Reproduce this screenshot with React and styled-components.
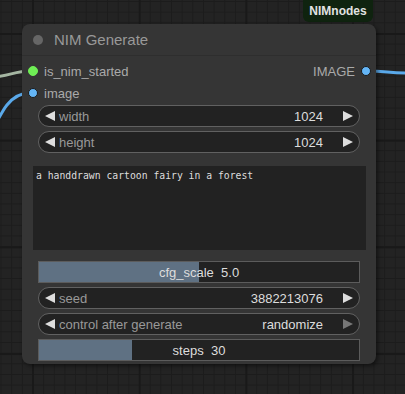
import React from 'react';
import styled, { createGlobalStyle } from 'styled-components';

const GlobalStyle = createGlobalStyle`
  html, body {
    margin: 0;
    padding: 0;
    background: #222222;
  }
  body {
    font-family: "Liberation Sans", Arial, sans-serif;
  }
`;

// canvas with the litegraph grid
const Canvas = styled.div`
  position: relative;
  width: 405px;
  height: 394px;
  overflow: hidden;
  background-color: #232323;
  background-image:
    linear-gradient(to right, #191919 2px, transparent 2px),
    linear-gradient(to bottom, #191919 2px, transparent 2px),
    linear-gradient(to right, #1c1c1c 1px, transparent 1px),
    linear-gradient(to bottom, #1c1c1c 1px, transparent 1px);
  background-size: 106.7px 106.7px, 106.7px 106.7px, 10.67px 10.67px, 10.67px 10.67px;
  background-position: 32px 33px, 32px 33px, 0.5px 1px, 0.5px 1px;
`;

const Wires = styled.svg`
  position: absolute;
  left: 0;
  top: 0;
  width: 405px;
  height: 394px;
`;

const Badge = styled.div`
  position: absolute;
  left: 303px;
  top: -6px;
  width: 70px;
  height: 28px;
  box-sizing: border-box;
  padding-top: 6px;
  border-radius: 6px;
  background: #0f230f;
  color: #e2e2e2;
  font-size: 12px;
  font-weight: bold;
  display: flex;
  align-items: center;
  justify-content: center;
`;

const Node = styled.div`
  position: absolute;
  left: 22px;
  top: 24px;
  width: 354px;
  height: 340px;
  box-sizing: border-box;
  background: #353535;
  border-radius: 8px;
  box-shadow: 2px 2px 4px rgba(0, 0, 0, 0.45);
  display: flex;
  flex-direction: column;
`;

const Title = styled.div`
  height: 32px;
  box-sizing: border-box;
  border-bottom: 1px solid #2e2e2e;
  display: flex;
  align-items: center;
  gap: 6px;
  padding-left: 11px;
  color: #999999;
  font-size: 15px;
`;

const TitleDot = styled.span`
  width: 10px;
  height: 10px;
  border-radius: 50%;
  background: #666666;
  margin-right: 5px;
`;

const Body = styled.div`
  display: flex;
  flex-direction: column;
  padding-top: 4px;
`;

const SlotRow = styled.div`
  height: 22px;
  display: flex;
  align-items: center;
  justify-content: space-between;
  padding: 0 5px 0 6px;
  font-size: 13px;
  color: #aaaaaa;
`;

const Slot = styled.div`
  display: flex;
  align-items: center;
  gap: 6px;
`;

const SlotDot = styled.span`
  width: 8px;
  height: 8px;
  border-radius: 50%;
  background: ${p => p.color};
  border: 1px solid ${p => (p.linked ? '#1a1a1a' : p.color)};
`;

const Widgets = styled.div`
  display: flex;
  flex-direction: column;
  gap: 4px;
  margin: ${p => p.top}px 16px 0 16px;
`;

const Combo = styled.div`
  height: 22px;
  box-sizing: border-box;
  border: 1px solid #616161;
  border-radius: 11px;
  background: #222222;
  display: flex;
  align-items: center;
  padding: 0 6px 0 6px;
  font-size: 13px;
`;

const Arrow = styled.span`
  width: 0;
  height: 0;
  border-top: 5px solid transparent;
  border-bottom: 5px solid transparent;
  ${p => (p.dir === 'left'
    ? `border-right: 10px solid ${p.dim ? '#777' : '#dddddd'};`
    : `border-left: 10px solid ${p.dim ? '#777' : '#dddddd'};`)}
`;

const Label = styled.span`
  color: #999999;
  margin-left: 4px;
  flex: 1;
`;

const Value = styled.span`
  color: #dddddd;
  margin-right: 20px;
`;

const Prompt = styled.div`
  margin: 13px 10px 0 11px;
  height: 84px;
  box-sizing: border-box;
  background: #222222;
  padding: 4px 3px;
  color: #dddddd;
  font-family: "DejaVu Sans Mono", monospace;
  font-size: 9.75px;
`;

const Slider = styled.div`
  position: relative;
  height: 22px;
  box-sizing: border-box;
  border: 1px solid #5c5c5c;
  background: #222222;
  display: flex;
  align-items: center;
  justify-content: center;
  font-size: 13px;
  color: #dddddd;
`;

const SliderFill = styled.div`
  position: absolute;
  left: 0;
  top: 0;
  bottom: 0;
  background: #5f7183;
`;

const SliderText = styled.span`
  position: relative;
  white-space: pre;
`;

function ComboWidget({ label, value, dimRight }) {
  return (
    <Combo>
      <Arrow dir="left" />
      <Label>{label}</Label>
      <Value>{value}</Value>
      <Arrow dir="right" dim={dimRight} />
    </Combo>
  );
}

function SliderWidget({ label, value, fraction }) {
  return (
    <Slider>
      <SliderFill style={{ width: `${fraction * 100}%` }} />
      <SliderText>{`${label}  ${value}`}</SliderText>
    </Slider>
  );
}

export default function App() {
  return (
    <Canvas>
      <GlobalStyle />
      <Wires viewBox="0 0 405 394">
        <path d="M -10 77 C 8 77, 14 71, 30 71" stroke="#a5b6a2" strokeWidth="3" fill="none" />
        <path d="M -12 140 C 2 110, 10 93, 30 93" stroke="#5aa9ea" strokeWidth="3" fill="none" />
        <path d="M 368 71 C 385 71, 390 73, 410 73" stroke="#5aa9ea" strokeWidth="3" fill="none" />
      </Wires>
      <Badge>NIMnodes</Badge>
      <Node>
        <Title>
          <TitleDot />
          NIM Generate
        </Title>
        <Body>
          <SlotRow>
            <Slot>
              <SlotDot color="#6fee55" />
              is_nim_started
            </Slot>
            <Slot>
              IMAGE
              <SlotDot color="#64b5f6" linked />
            </Slot>
          </SlotRow>
          <SlotRow>
            <Slot>
              <SlotDot color="#64b5f6" linked />
              image
            </Slot>
          </SlotRow>
          <Widgets top={1}>
            <ComboWidget label="width" value="1024" />
            <ComboWidget label="height" value="1024" />
          </Widgets>
          <Prompt>a handdrawn cartoon fairy in a forest</Prompt>
          <Widgets top={11}>
            <SliderWidget label="cfg_scale" value="5.0" fraction={0.5} />
            <ComboWidget label="seed" value="3882213076" />
            <ComboWidget label="control after generate" value="randomize" dimRight />
            <SliderWidget label="steps" value="30" fraction={0.29} />
          </Widgets>
        </Body>
      </Node>
    </Canvas>
  );
}
